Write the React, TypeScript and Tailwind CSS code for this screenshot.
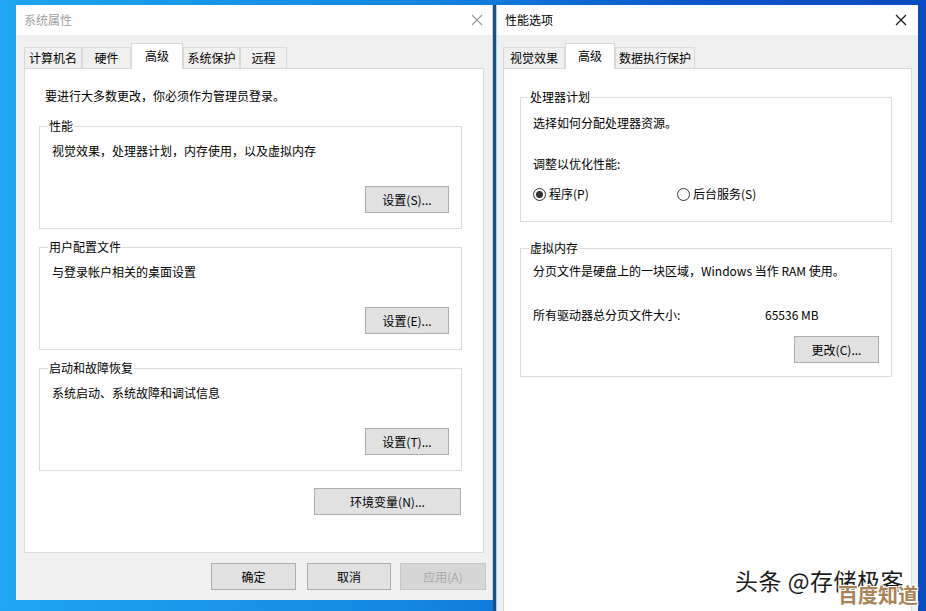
import React from "react";

const FONT = { fontFamily: '"Noto Sans CJK SC", "Noto Sans", sans-serif' };

function CloseX({ color }: { color: string }) {
  return (
    <svg width="12" height="12" viewBox="0 0 12 12">
      <path d="M1 1 L11 11 M11 1 L1 11" stroke={color} strokeWidth="1.1" fill="none" />
    </svg>
  );
}

function Tab({ label, w, selected }: { label: string; w: number; selected?: boolean }) {
  if (selected) {
    return (
      <div
        className="relative z-10 -mb-px flex h-[26px] items-start justify-center border border-b-0 border-[#d9d9d9] bg-white pt-[4px] text-[12px] leading-[16px] text-black"
        style={{ width: w }}
      >
        {label}
      </div>
    );
  }
  return (
    <div
      className="flex h-[21px] items-center justify-center border border-b-0 border-[#d9d9d9] bg-[#f0f0f0] text-[12px] leading-[16px] text-black"
      style={{ width: w }}
    >
      {label}
    </div>
  );
}

function Btn({ label, w, disabled }: { label: string; w: number; disabled?: boolean }) {
  return (
    <div
      className={
        "flex h-[27px] items-center justify-center border text-[12px] leading-[16px] " +
        (disabled ? "border-[#c6c6c6] bg-[#d6d6d6] text-[#a8a8a8]" : "border-[#adadad] bg-[#e1e1e1] text-black")
      }
      style={{ width: w }}
    >
      {label}
    </div>
  );
}

function Group({ label, children, className }: { label: string; children: React.ReactNode; className?: string }) {
  return (
    <div className={"relative border border-[#dcdcdc] " + (className || "")}>
      <div className="absolute -top-[9px] left-[8px] bg-white px-px text-[12px] leading-[16px] text-black">{label}</div>
      {children}
    </div>
  );
}

function LeftGroup({ label, text, btn }: { label: string; text: string; btn: string }) {
  return (
    <Group label={label} className="flex h-[103px] flex-col pt-[16px] pl-[12px] pr-[12px]">
      <div className="text-[12px] leading-[16px] text-black">{text}</div>
      <div className="mt-[27px] self-end">
        <Btn label={btn} w={84} />
      </div>
    </Group>
  );
}

function Radio({ checked }: { checked?: boolean }) {
  return (
    <div className="flex h-[13px] w-[13px] items-center justify-center rounded-full border border-[#333333] bg-white">
      {checked && <div className="h-[7px] w-[7px] rounded-full bg-[#333333]" />}
    </div>
  );
}

export default function App() {
  return (
    <div
      className="relative h-[611px] w-[926px] overflow-hidden bg-[linear-gradient(90deg,#1ea6f2_0%,#1486e0_45%,#0b56c8_75%,#0a4cc0_100%)]"
      style={FONT}
    >
      {/* Left window: 系统属性 */}
      <div className="absolute left-[16px] top-[5px] flex h-[595px] w-[477px] flex-col border-r border-[#c8d2da] bg-[#f0f0f0]">
        <div className="flex h-[30px] shrink-0 items-center justify-between bg-white pl-[8px] pr-[9px]">
          <span className="text-[12px] leading-[16px] text-[#a0a0a0]">系统属性</span>
          <CloseX color="#9a9a9a" />
        </div>
        <div className="flex flex-col px-[8px] pt-[8px]">
          <div className="flex items-end">
            <Tab label="计算机名" w={58} />
            <Tab label="硬件" w={49} />
            <Tab label="高级" w={52} selected />
            <Tab label="系统保护" w={57} />
            <Tab label="远程" w={47} />
          </div>
          <div className="flex h-[485px] flex-col border border-[#d9d9d9] bg-white pl-[14px] pr-[21px] pt-[19px]">
            <div className="pl-[6px] text-[12px] leading-[16px] text-black">要进行大多数更改，你必须作为管理员登录。</div>
            <div className="mt-[22px] flex flex-col gap-[18px]">
              <LeftGroup label="性能" text="视觉效果，处理器计划，内存使用，以及虚拟内存" btn="设置(S)..." />
              <LeftGroup label="用户配置文件" text="与登录帐户相关的桌面设置" btn="设置(E)..." />
              <LeftGroup label="启动和故障恢复" text="系统启动、系统故障和调试信息" btn="设置(T)..." />
            </div>
            <div className="mt-[17px] self-end pr-px">
              <Btn label="环境变量(N)..." w={147} />
            </div>
          </div>
          <div className="mr-[-2px] mt-[10px] flex justify-end">
            <Btn label="确定" w={85} />
            <div className="ml-[11px]">
              <Btn label="取消" w={84} />
            </div>
            <div className="ml-[9px]">
              <Btn label="应用(A)" w={86} disabled />
            </div>
          </div>
        </div>
      </div>

      {/* Right window: 性能选项 */}
      <div className="absolute left-[496px] top-[5px] flex h-[620px] w-[422px] flex-col border-l border-[#9fd0ee] bg-[#f0f0f0] shadow-[-3px_0_0_#1b4f88]">
        <div className="flex h-[30px] shrink-0 items-center justify-between bg-white pl-[8px] pr-[11px]">
          <span className="text-[12px] leading-[16px] text-black">性能选项</span>
          <CloseX color="#111111" />
        </div>
        <div className="flex flex-1 flex-col pl-[6px] pr-[6px] pt-[8px]">
          <div className="flex items-end">
            <Tab label="视觉效果" w={62} />
            <Tab label="高级" w={50} selected />
            <Tab label="数据执行保护" w={80} />
          </div>
          <div className="flex flex-1 flex-col border border-[#d9d9d9] bg-white pl-[16px] pr-[19px] pt-[28px]">
            <Group label="处理器计划" className="flex h-[125px] flex-col pl-[12px] pt-[17px]">
              <div className="text-[12px] leading-[16px] text-black">选择如何分配处理器资源。</div>
              <div className="mt-[25px] text-[12px] leading-[16px] text-black">调整以优化性能:</div>
              <div className="mt-[14px] flex items-center text-[12px] leading-[16px] text-black">
                <div className="flex w-[144px] items-center gap-[3px]">
                  <Radio checked />
                  <span>程序(P)</span>
                </div>
                <div className="flex items-center gap-[3px]">
                  <Radio />
                  <span>后台服务(S)</span>
                </div>
              </div>
            </Group>
            <Group label="虚拟内存" className="mt-[26px] flex h-[129px] flex-col pl-[12px] pr-[12px] pt-[14px]">
              <div className="text-[12px] leading-[16px] text-black">分页文件是硬盘上的一块区域，Windows 当作 RAM 使用。</div>
              <div className="mt-[28px] flex text-[12px] leading-[16px] text-black">
                <span className="w-[232px]">所有驱动器总分页文件大小:</span>
                <span>65536 MB</span>
              </div>
              <div className="mt-[13px] self-end">
                <Btn label="更改(C)..." w={85} />
              </div>
            </Group>
          </div>
        </div>
      </div>

      {/* Watermark */}
      <div
        className="absolute left-[735px] top-[566px] text-[23px] leading-[28px] tracking-[0.5px] text-[#1a1a1a]"
        style={{ textShadow: "1px 1px 0 #fff, -1px -1px 0 #fff, 1px -1px 0 #fff, -1px 1px 0 #fff" }}
      >
        头条 @存储极客
      </div>
      <div
        className="absolute left-[838px] top-[583px] text-[20px] font-bold leading-[24px] text-[#a98255]"
        style={{ textShadow: "1px 1px 0 #fff, -1px -1px 0 #fff, 1px -1px 0 #fff, -1px 1px 0 #fff" }}
      >
        百度知道
      </div>
    </div>
  );
}
